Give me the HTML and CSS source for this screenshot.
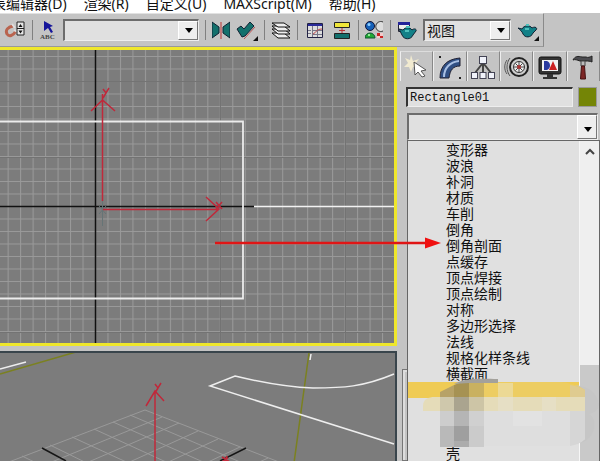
FILE: index.html
```html
<!DOCTYPE html>
<html lang="zh-CN">
<head>
  <meta charset="UTF-8">
  <meta name="viewport" content="width=device-width, initial-scale=1.0">
  <title>Rectangle01</title>
  <link rel="stylesheet" href="styles.css">
</head>
<body>
  <!-- Menu -->
  <nav class="menubar">
    <button type="button" class="menu-item">表编辑器(D)</button>
    <button type="button" class="menu-item">渲染(R)</button>
    <button type="button" class="menu-item">自定义(U)</button>
    <button type="button" class="menu-item">MAXScript(M)</button>
    <button type="button" class="menu-item">帮助(H)</button>
  </nav>

  <!-- Toolbar -->
  <div class="toolbar">
    <button type="button" class="tool" aria-label="微调器捕捉">
      <svg width="22" height="22" viewBox="0 0 22 22">
        <path d="M9 7C4 8 1 11 3 15c2 3 6 2 9-3" fill="none" stroke="#b9644f" stroke-width="3"/>
        <path d="M8 5l3 4M10 11l4 2" stroke="#ddd" stroke-width="2"/>
        <path d="M13 3h7v13h-7zM13 9.500h7" fill="#e8e8e8" stroke="#222"/>
        <path d="M14.500 8l2-3 2 3zM14.500 11.500l2 3 2-3z" fill="#111"/>
      </svg>
    </button>
    <span class="sep"></span>
    <button type="button" class="tool" aria-label="命名选择集">
      <svg width="18" height="22" viewBox="0 0 18 22">
        <path d="M5 2l9 5-3 1 3 5-2 1-3-5-4 3z" fill="#15159a"/>
        <text x="1" y="20" class="abc">ABC</text>
      </svg>
    </button>
    <span class="combo combo-set"><select aria-label="选择集"><option></option></select></span>
    <span class="sep"></span>
    <button type="button" class="tool" aria-label="镜像">
      <svg width="18" height="22" viewBox="0 0 18 22">
        <path d="M0 3l7 5v6l-7 5zM18 3l-7 5v6l7 5z" fill="#13706c" stroke="#123"/>
        <path d="M9 3v17" stroke="#b33"/>
      </svg>
    </button>
    <button type="button" class="tool" aria-label="对齐">
      <svg width="22" height="22" viewBox="0 0 22 22">
        <path d="M1 10l4-3 3 3 6-7 4 4-9 10-3 1z" fill="#13706c" stroke="#123"/>
        <path d="M8 20L19 8" stroke="#b55"/>
        <path d="M22 17v5h-5z" fill="#111"/>
      </svg>
    </button>
    <span class="sep"></span>
    <button type="button" class="tool" aria-label="层管理器">
      <svg width="20" height="22" viewBox="0 0 20 22">
        <g fill="#eee" stroke="#111">
          <path d="M1 14h12l6 5H7z"/>
          <path d="M1 10h12l6 5H7z"/>
          <path d="M1 7h12l6 5H7z"/>
          <path d="M1 4h12l6 4H7z"/>
        </g>
      </svg>
    </button>
    <span class="sep"></span>
    <button type="button" class="tool" aria-label="曲线编辑器">
      <svg width="22" height="22" viewBox="0 0 22 22">
        <path d="M3.500 4.500h15v14h-15z" fill="#ddd" stroke="#224"/>
        <path d="M4 6h14" stroke="#2a2a99" stroke-width="2"/>
        <path d="M8.500 7v11M4 11.500h3M4 14.500h3M13.500 7v11M9 11.500h9M9 15.500h9" stroke="#778"/>
        <path d="M9 15c3-1 3-5 9-5" fill="none" stroke="#b44"/>
      </svg>
    </button>
    <button type="button" class="tool" aria-label="图解视图">
      <svg width="20" height="22" viewBox="0 0 20 22">
        <path d="M2.500 3.500h15v5h-15z" fill="#f0e63a" stroke="#222"/>
        <path d="M10 9v5M7 11.500h6" stroke="#b33"/>
        <path d="M2.500 14.500h15v5h-15z" fill="#13706c" stroke="#222"/>
      </svg>
    </button>
    <span class="sep"></span>
    <button type="button" class="tool" aria-label="材质编辑器">
      <svg width="19" height="22" viewBox="0 0 19 22">
        <circle cx="5" cy="7" r="4.500" fill="#1560b8" stroke="#113"/>
        <circle cx="4" cy="5.500" r="1.500" fill="#8fd0ff"/>
        <path d="M18 3a5 5 0 1 0 0 9" fill="#ddd" stroke="#333"/>
        <path d="M0 19a5 5 0 0 1 10 0z" fill="#22aa33" stroke="#153"/>
        <circle cx="4" cy="16" r="1" fill="#bfb"/>
        <path d="M12 14h6v5h-6z" fill="#c22"/>
        <path d="M12 17h3v2h-3zM15 14h3v3h-3z" fill="#f4caca"/>
      </svg>
    </button>
    <span class="sep"></span>
    <button type="button" class="tool" aria-label="渲染场景">
      <svg width="20" height="22" viewBox="0 0 20 22">
        <path d="M1.500 3.500h11v9h-11z" fill="#eee" stroke="#223"/>
        <path d="M1 4.500h12" stroke="#22229a" stroke-width="3"/>
        <path d="M2 10l4 1c2-3 7-3 9 0 2-2 5-1 4 1l-3 4c-2 5-9 5-11 0-1-2-2-4-3-6z" fill="#128087" stroke="#123"/>
        <path d="M9 8h4M8 12h4" stroke="#4fc0bc" stroke-width="2"/>
      </svg>
    </button>
    <span class="combo combo-view"><select aria-label="渲染类型"><option>视图</option></select></span>
    <button type="button" class="tool" aria-label="快速渲染">
      <svg width="22" height="22" viewBox="0 0 22 22">
        <path d="M1 9l4 1c2-4 8-4 10-1 3-2 6 0 4 2l-3 3c-2 5-8 5-10 1-1-3-3-4-5-6z" fill="#128087" stroke="#123"/>
        <path d="M9 6h3M8 10h4" stroke="#4fc0bc" stroke-width="2"/>
        <path d="M22 17v5h-5z" fill="#111"/>
      </svg>
    </button>
  </div>

  <main class="workspace">
    <div class="viewports">
      <!-- Front view -->
      <div class="viewport active">
        <svg class="scene" width="100%" height="100%">
          <defs>
            <pattern id="grid" x="95" y="6" width="12.480" height="12.500" patternUnits="userSpaceOnUse">
              <path d="M0.500 0V12.500M0 0.500H12.500" stroke="#9a9a9a" fill="none"/>
            </pattern>
          </defs>
          <rect width="100%" height="100%" fill="url(#grid)"/>
          <path d="M0 31.500H400M0 107.500H400M0 282.500H400M220.500 0V300M345.500 0V300" stroke="#737373"/>
          <path d="M95.500 0V300M0 156.500H254" stroke="#111" stroke-width="1.500"/>
          <path d="M254 156.500H2000" stroke="#f2f2f2" stroke-width="1.500"/>
          <path d="M0 71.500H243V248.500H0" fill="none" stroke="#ececec" stroke-width="1.800"/>
          <path d="M102.500 150V176M99 156l7 8M106 156l-7 8" stroke="#667476" fill="none"/>
          <g class="gizmo">
            <path d="M102.500 151V44M91 61l11.500-11L115 61"/>
            <path d="M103 159.500H219M206 147l13 12-13 12"/>
            <path d="M103 39l3 4 3-5M106 43l-3 5"/>
            <path d="M216 152l6 7M222 152l-6 7"/>
          </g>
        </svg>
      </div>

      <!-- Perspective view -->
      <div class="viewport">
        <svg class="scene" width="100%" height="100%">
          <g transform="translate(0 -353)">
            <g stroke="#999" fill="none">
              <path d="M145 410L-20 473M162 417L10 479M179 423L35 485M198 431L70 489M218 439L110 489M240 447L140 494M268 458L190 494"/>
              <path d="M145 410L310 474M130 415L280 479M113 422L255 485M94 429L225 489M72 437L185 489M50 445L150 494M22 456L100 494"/>
            </g>
            <path d="M42 448l24 13M246 448l-26 13" stroke="#161616" stroke-width="1.500"/>
            <path d="M0 374l76-22M309 353l-15 110" stroke="#7b8120" stroke-width="1.500"/>
            <g stroke="#eee" stroke-width="1.500" fill="none">
              <path d="M0 369l26-7M311 354l-1 6"/>
              <path d="M394 444L210 386l25-10c25 6 50 11 78 12 30 0 50-1 81-14"/>
            </g>
            <g class="gizmo">
              <path d="M155 500V391M146 406l9-15 9 10M155 384l3 4 3-5M158 388l-3 5"/>
              <path d="M220 463l8-5M222 457l8 5M224 463l3-7"/>
            </g>
          </g>
        </svg>
      </div>
    </div>

    <!-- Command panel -->
    <aside class="panel">
      <div class="tabs">
        <button type="button" class="tab" aria-label="创建">
          <svg width="26" height="26" viewBox="0 0 26 26">
            <path d="M7 1l2 6 6-2-4 5 4 3-6 0-2 5-2-5-5 0 4-4-3-5 5 2z" fill="#f1ead0"/>
            <path d="M10 8l12 8-5 1 4 5-3 1-4-5-3 3z" fill="#fff" stroke="#555"/>
          </svg>
        </button>
        <button type="button" class="tab current" aria-label="修改">
          <svg width="26" height="26" viewBox="0 0 26 26">
            <path d="M3 24C3 12 10 5 23 4v8c-7 0-10 4-11 12z" fill="#304f83" stroke="#223"/>
            <path d="M7 23C7 14 13 8 22 7" fill="none" stroke="#a9c0e4" stroke-width="2"/>
            <path d="M2 2h2v2H2zM22 23h2v2h-2z" fill="#222"/>
          </svg>
        </button>
        <button type="button" class="tab" aria-label="层次">
          <svg width="26" height="26" viewBox="0 0 26 26">
            <path d="M13 10v9M12 10L5 19M14 10l7 9" stroke="#444" stroke-width="2"/>
            <g fill="#f0f2fa" stroke="#445">
              <rect x="9.500" y="2.500" width="7" height="7"/>
              <rect x="1.500" y="18.500" width="6" height="6"/>
              <rect x="10" y="18.500" width="6" height="6"/>
              <rect x="18.500" y="18.500" width="6" height="6"/>
            </g>
          </svg>
        </button>
        <button type="button" class="tab" aria-label="运动">
          <svg width="26" height="26" viewBox="0 0 26 26">
            <circle cx="15" cy="13" r="9" fill="#ccc" stroke="#222" stroke-width="2"/>
            <circle cx="15" cy="13" r="5.500" fill="#eee" stroke="#333"/>
            <path d="M15 8v10M10 13h10M11.500 9.500l7 7M18.500 9.500l-7 7" stroke="#444"/>
            <circle cx="15" cy="13" r="2" fill="#a33"/>
            <path d="M6 4c-4 5-4 13 0 18M3 6c-3 4-3 10 0 14" fill="none" stroke="#555"/>
          </svg>
        </button>
        <button type="button" class="tab" aria-label="显示">
          <svg width="26" height="26" viewBox="0 0 26 26">
            <rect x="2" y="3" width="22" height="17" rx="2" fill="#333" stroke="#111"/>
            <rect x="5" y="6" width="16" height="11" fill="#f2f2f2"/>
            <path d="M7 7h3c4 1 4 8 0 9H7z" fill="#2a3aa0"/>
            <path d="M12 16l4-9 4 9z" fill="#c22"/>
            <path d="M10 20h6v3h4v2H6v-2h4z" fill="#333"/>
          </svg>
        </button>
        <button type="button" class="tab" aria-label="工具">
          <svg width="26" height="26" viewBox="0 0 26 26">
            <path d="M3 6c2-4 5-4 9-3h4c2 1 4 0 6-1v6c-2-1-4-1-6-1h-6C7 6 5 5 3 6z" fill="#4b4b4f" stroke="#222"/>
            <path d="M11 7h4v5h-4z" fill="#bbb" stroke="#444"/>
            <path d="M11.500 12h3l1 13h-5z" fill="#7c2525" stroke="#411"/>
          </svg>
        </button>
      </div>

      <div class="name-row">
        <input class="name-field" type="text" value="Rectangle01" aria-label="对象名称">
        <button type="button" class="swatch" aria-label="对象颜色"></button>
      </div>

      <div class="modifiers">
        <div class="rollout"></div>
        <span class="combo combo-modifier"><select aria-label="修改器列表"><option></option></select></span>
        <div class="dropdown">
          <select class="modifier-list" size="20" aria-label="修改器">
            <option>变形器</option>
            <option>波浪</option>
            <option>补洞</option>
            <option>材质</option>
            <option>车削</option>
            <option>倒角</option>
            <option>倒角剖面</option>
            <option>点缓存</option>
            <option>顶点焊接</option>
            <option>顶点绘制</option>
            <option>对称</option>
            <option>多边形选择</option>
            <option>法线</option>
            <option>规格化样条线</option>
            <option>横截面</option>
            <option class="highlight">&nbsp;</option>
            <option>&nbsp;</option>
            <option>&nbsp;</option>
            <option>&nbsp;</option>
            <option>壳</option>
          </select>
          <div class="scrollbar">
            <button type="button" class="scroll-up" aria-label="向上滚动">
              <svg width="10" height="7" viewBox="0 0 10 7"><path d="M1 6l4-4 4 4" fill="none" stroke="#444" stroke-width="2"/></svg>
            </button>
            <div class="scroll-thumb"></div>
          </div>

          <!-- Mosaic over the lower rows -->
          <svg class="mosaic" width="180" height="70" viewBox="0 0 180 70">
            <path d="M150 8c16-3 28 7 29 19-1 5-5 8-10 9 10 6 6 27-10 29h-13z" fill="#c6c6c6"/>
            <path d="M20 15C32 6 48 2 64 4h78c12 2 19 5 23 8v7H20z" fill="#edcd62"/>
            <path d="M3 28c0-7 5-9 12-9h150v14H3z" fill="#e5dcb9"/>
            <path d="M20 33h145v28c-6 5-12 7-22 7H20z" fill="#dedede"/>
            <path d="M20 14l14-7v12H20z" fill="#b7a267"/>
            <path d="M34 7c9-4 19-6 29-6v18H34z" fill="#a69253"/>
            <path d="M34 6c8-5 20-6 44-5v4H49z" fill="#a3a19b"/>
            <path d="M49 5h15v14H49z" fill="#c9b160"/>
            <path d="M78 5h15v14H78z" fill="#ecd995"/>
            <path d="M150 7c7 1 12 3 15 5v7h-15z" fill="#dfcb90"/>
            <path d="M20 19h14v14H20z" fill="#cfc8ac"/>
            <path d="M34 19h15v14H34z" fill="#aaa48f"/>
            <path d="M49 19h15v14H49z" fill="#cdc5a6"/>
            <path d="M78 19h15v14H78zM122 19h14v14h-14z" fill="#e6dfc5"/>
            <path d="M20 33h14v15H20z" fill="#cdcdcd"/>
            <path d="M34 33h15v15H34z" fill="#b5b5b5"/>
            <path d="M49 33h15v15H49z" fill="#d0d0d0"/>
            <path d="M93 33h29v15H93z" fill="#e2e2e2"/>
            <path d="M20 48h14v21H20z" fill="#b9b9b9"/>
            <path d="M34 48h15v15H34z" fill="#9f9f9f"/>
            <path d="M34 63h15v6H34z" fill="#acacac"/>
            <path d="M49 48h15v21H49z" fill="#cbcbcb"/>
            <path d="M150 33h15v28c-4 4-9 6-15 7z" fill="#d6d6d6"/>
          </svg>
        </div>
      </div>
    </aside>

    <!-- Pointer to the bevel profile modifier -->
    <svg class="callout" width="228" height="14" viewBox="0 0 228 14">
      <path d="M0 7h212" stroke="#e01515" stroke-width="2.500"/>
      <path d="M210 1.500L226 7l-16 5.500z" fill="#f01010"/>
    </svg>
  </main>
</body>
</html>
```

FILE: styles.css
```css
* {
  box-sizing: border-box;
}
body {
  margin: 0;
  height: 100vh;
  display: flex;
  flex-direction: column;
  overflow: hidden;
  background: #c4c4c4;
  font-family: "Noto Sans", "Noto Sans CJK SC", sans-serif;
  color: #111;
}
button, select, input {
  font: inherit;
  color: inherit;
  border: none;
  border-radius: 0;
  padding: 0;
  margin: 0;
}
button {
  background: none;
  display: flex;
  align-items: center;
  justify-content: center;
}
svg {
  display: block;
  flex: none;
}

/* Menu */
.menubar {
  display: flex;
  align-items: flex-end;
  gap: 17px;
  height: 13px;
  overflow: hidden;
  background: #fff;
  flex: none;
}
.menu-item {
  font-size: 14px;
  line-height: 18px;
  height: 18px;
  white-space: nowrap;
}
.menu-item:first-child {
  margin-left: -8px;
}

/* Toolbar */
.toolbar {
  display: flex;
  align-items: center;
  align-self: flex-start;
  gap: 6px;
  height: 34px;
  padding: 0 4px;
  flex: none;
  border-top: 1px solid #e2e2e2;
  border-right: 1px solid #8a8a8a;
  border-bottom: 1px solid #999;
}
.tool {
  flex: none;
}
.sep {
  width: 1px;
  height: 20px;
  background: #808080;
}
.abc {
  font: bold 7px "Liberation Serif", serif;
  fill: #444;
}

/* Drop-downs */
.combo {
  position: relative;
  display: flex;
  height: 22px;
  background: #e0e0e0;
  border: 1px solid #eee;
  border-top: 2px solid #6c6c6c;
  border-left: 2px solid #6c6c6c;
}
.combo select {
  appearance: none;
  width: 100%;
  background: transparent;
  font-size: 14px;
  line-height: 18px;
  padding-left: 2px;
}
.combo::before {
  content: "";
  position: absolute;
  top: 0;
  right: 0;
  bottom: 0;
  width: 18px;
  background: #eee;
  border: 1px solid #fff;
  border-right-color: #777;
  border-bottom-color: #777;
  pointer-events: none;
}
.combo::after {
  content: "";
  position: absolute;
  right: 5px;
  bottom: 7px;
  border: 4px solid transparent;
  border-top: 5px solid #000;
  border-bottom: none;
  pointer-events: none;
}
.combo-set {
  width: 136px;
}
.combo-view {
  width: 88px;
}

/* Workspace */
.workspace {
  position: relative;
  display: flex;
  flex: 1;
  min-height: 0;
}
.viewports {
  flex: 1;
  min-width: 0;
  display: grid;
  grid-template-rows: 299px 1fr;
  gap: 5px;
}
.viewport {
  min-height: 0;
  overflow: hidden;
  background: #7c7c7c;
  border-top: 2px solid #39454c;
  border-right: 2px solid #39454c;
}
.viewport.active {
  border: 3px solid #efe72c;
  border-left: none;
}
.gizmo {
  fill: none;
  stroke: #c0283a;
  stroke-width: 1.5;
}

/* Command panel */
.panel {
  width: 203px;
  display: flex;
  flex-direction: column;
  padding: 4px 0 0 3px;
}
.tabs {
  display: flex;
  height: 30px;
}
.tab {
  flex: 1;
  border-left: 1px solid #eee;
  border-top: 1px solid #ddd;
  border-right: 1px solid #888;
}
.tab.current {
  background: #cdcdcd;
}
.name-row {
  display: flex;
  gap: 5px;
  padding: 6px 3px 0 6px;
}
.name-field {
  flex: 1;
  min-width: 0;
  height: 20px;
  padding-left: 2px;
  background: #e0e0e0;
  border: 1px solid #eee;
  border-top: 2px solid #333;
  border-left: 2px solid #333;
  font-family: "Liberation Mono", monospace;
  font-size: 12px;
}
.swatch {
  width: 19px;
  height: 20px;
  background: #748506;
  border: 1px solid #999;
}
.modifiers {
  position: relative;
  display: flex;
  flex-direction: column;
  flex: 1;
  min-height: 0;
  padding: 6px 0 0 7px;
}
.rollout {
  position: absolute;
  left: 2px;
  top: 262px;
  bottom: 0;
  width: 10px;
  border: 1px solid #777;
  box-shadow: inset 2px 2px 0 #ddd;
}
.combo-modifier {
  height: 27px;
  margin-right: 2px;
  flex: none;
}
.dropdown {
  position: relative;
  display: flex;
  flex: 1;
  min-height: 0;
  overflow: hidden;
  background: #e0e0e0;
  border: 1px solid #666;
  border-bottom: none;
}
/* CJK glyphs sit low in the 16px rows, so the list starts a little higher */
.modifier-list {
  flex: 1;
  min-width: 0;
  overflow: hidden;
  margin-top: -2px;
  background: #e0e0e0;
  font-size: 14px;
}
.modifier-list option {
  height: 16px;
  min-height: 16px;
  padding: 0 0 0 38px;
}
.modifier-list .highlight {
  background: linear-gradient(transparent 3px, #efcb55 3px);
  box-shadow: 0 3px 0 #efcb55;
}
.scrollbar {
  width: 20px;
  display: flex;
  flex-direction: column;
  background: #efefef;
  border-left: 1px solid #f6f6f6;
}
.scroll-up {
  height: 20px;
}
.scroll-thumb {
  margin-top: 204px;
  flex: 1;
  background: #c9c9c9;
}
.mosaic {
  position: absolute;
  left: 12px;
  top: 237px;
}
.callout {
  position: absolute;
  left: 215px;
  top: 189px;
}
```
